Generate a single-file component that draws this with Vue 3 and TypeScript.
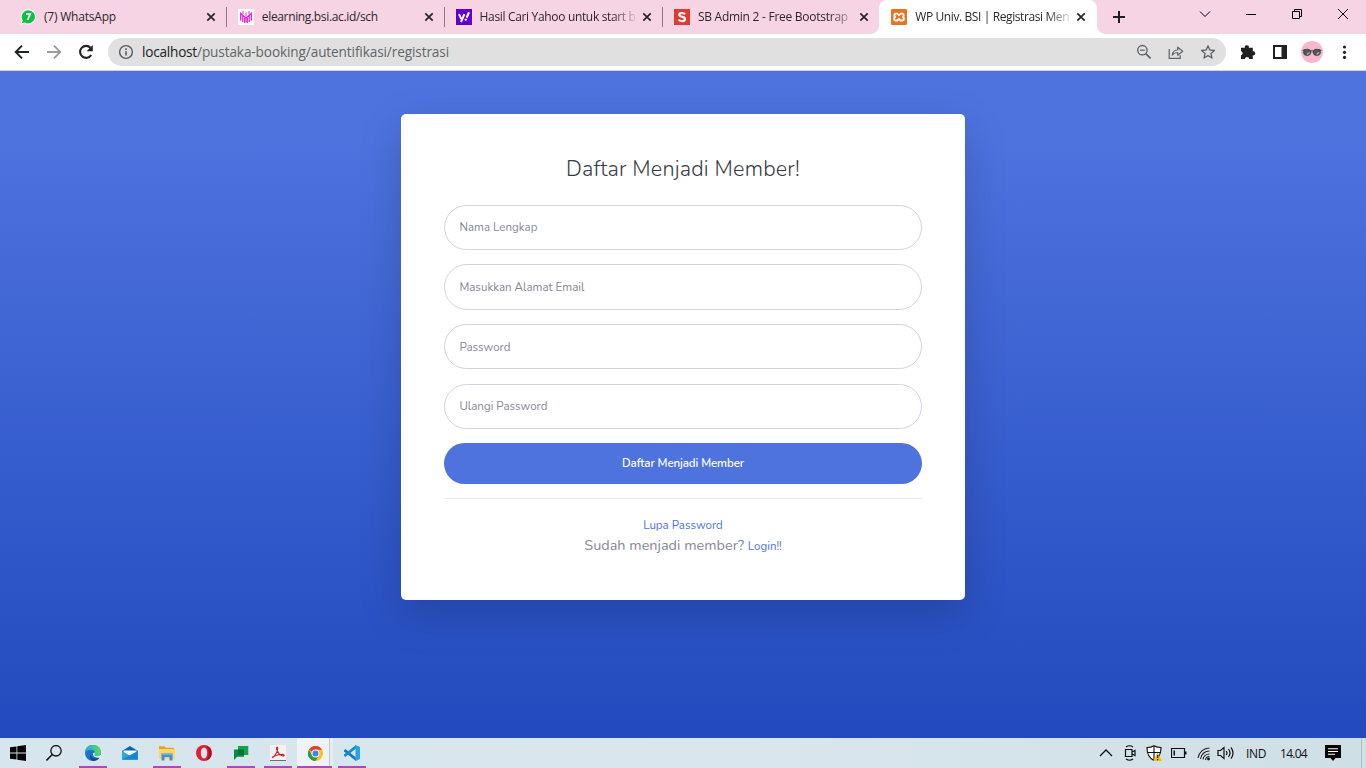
<script setup lang="ts">
import { nextTick, onMounted, type Directive } from 'vue'

interface Tab {
  id: string
  title: string
  width: number
  active?: boolean
}

const tabs: Tab[] = [
  { id: 'whatsapp', title: '(7) WhatsApp', width: 72 },
  { id: 'elearning', title: 'elearning.bsi.ac.id/sch', width: 116 },
  { id: 'yahoo', title: 'Hasil Cari Yahoo untuk start b', width: 156 },
  { id: 'sbadmin', title: 'SB Admin 2 - Free Bootstrap', width: 150 },
  { id: 'xampp', title: 'WP Univ. BSI | Registrasi Men', width: 154, active: true },
]

const fields = [
  { name: 'nama', type: 'text', placeholder: 'Nama Lengkap', width: 78 },
  { name: 'email', type: 'text', placeholder: 'Masukkan Alamat Email', width: 125 },
  { name: 'password1', type: 'password', placeholder: 'Password', width: 51 },
  { name: 'password2', type: 'password', placeholder: 'Ulangi Password', width: 88 },
]

const apps = [
  { id: 'edge', open: true },
  { id: 'mail', open: false },
  { id: 'files', open: true },
  { id: 'opera', open: false },
  { id: 'meet', open: true },
  { id: 'acrobat', open: true },
  { id: 'chrome', open: true },
  { id: 'vscode', open: true },
]

// Tracks the text so that the run is as wide as the given number of pixels.
const fitted: Array<() => void> = []
function fit(el: HTMLElement, width: number) {
  const text = el instanceof HTMLInputElement ? el.placeholder : (el.textContent ?? '').trim()
  const style = getComputedStyle(el)
  const ctx = document.createElement('canvas').getContext('2d')
  if (!ctx || !text) return
  ctx.font = `${style.fontWeight} ${style.fontSize} ${style.fontFamily}`
  const natural = ctx.measureText(text).width
  el.style.letterSpacing = `${((width - natural) / text.length).toFixed(3)}px`
}
const vFit: Directive<HTMLElement, number> = {
  mounted(el, binding) {
    fitted.push(() => fit(el, binding.value))
  },
}
onMounted(async () => {
  await nextTick()
  fitted.forEach((run) => run())
})
</script>

<template>
  <div class="screen">
    <header class="tabstrip">
      <div v-for="tab in tabs" :key="tab.id" class="tab" :class="[{ active: tab.active }, tab.id]">
        <svg v-if="tab.id === 'whatsapp'" class="favicon" viewBox="0 0 16 16">
          <path d="M8.2.3a7.6 7.6 0 1 1-3.5 14.3L.4 15.7l1.2-4.2A7.6 7.6 0 0 1 8.2.3z" fill="#fff" />
          <path d="M8.2 1.3a6.6 6.6 0 1 1-3.4 12.2l-3 .8.9-2.9A6.6 6.6 0 0 1 8.2 1.3z" fill="#0dc143" />
          <path d="M6 5.1h4.2L7.6 11" fill="none" stroke="#fff" stroke-width="1.7" />
        </svg>
        <svg v-else-if="tab.id === 'elearning'" class="favicon" viewBox="0 0 16 16">
          <path d="M0 0h16v16H0z" fill="#fff" />
          <path d="M2.7 11.5V4.500L8 9.200l5.300-4.700v7M4.800 13V6.800M11.200 13V6.800M6.700 14V9M9.300 14V9" fill="none" stroke="#e21ddb" stroke-width="1.300" />
          <path d="M5 2v3M8 3.500v3.700M11 2v3" stroke="#ec2be4" stroke-width="1" />
          <path d="M8 10v3" stroke="#8b3f88" stroke-width=".9" />
        </svg>
        <svg v-else-if="tab.id === 'yahoo'" class="favicon" viewBox="0 0 16 16">
          <path d="M0 0h16v16H0z" fill="#5f01d1" />
          <path d="M3 5.2l2.3 5M8.4 5.2L5 13" fill="none" stroke="#fff" stroke-width="2" />
          <path d="M13 3.2l-2.3 5.4" stroke="#fff" stroke-width="2.2" />
          <circle cx="9.8" cy="10.6" r="1.2" fill="#fff" />
        </svg>
        <svg v-else-if="tab.id === 'sbadmin'" class="favicon" viewBox="0 0 16 16">
          <path d="M0 0h16v16H0z" fill="#dd3d31" />
          <path d="M11 5.3C10 3.6 5.2 3.3 5.2 5.7c0 2.6 5.9 1.5 5.9 4.4 0 2.8-5.4 2.6-6.5.5" fill="none" stroke="#fff" stroke-width="2.1" />
        </svg>
        <svg v-else class="favicon" viewBox="0 0 16 16">
          <rect width="16" height="16" rx="1.2" fill="#e9731f" />
          <path d="M4.9 4.7h1.5L8 6.3l1.6-1.6h1.5a1.6 1.6 0 0 1 0 3.2 1.7 1.7 0 0 1 0 3.6H9.6L8 9.9l-1.6 1.6H4.9a1.7 1.7 0 0 1 0-3.6 1.6 1.6 0 0 1 0-3.2z" fill="none" stroke="#fff" stroke-width="1.8" />
        </svg>
        <span class="tab-title"><span v-fit="tab.width">{{ tab.title }}</span></span>
        <svg class="close" viewBox="0 0 10 10"><path d="M1.3 1.3l7.4 7.4M8.7 1.3L1.3 8.7" stroke="#26242a" stroke-width="1.7" /></svg>
      </div>
      <svg class="plus" viewBox="0 0 12 12"><path d="M6 0v12M0 6h12" stroke="#1f1f22" stroke-width="2" /></svg>
      <div class="window-controls">
        <svg viewBox="0 0 12 12"><path d="M1 3.500l5 5 5-5" fill="none" stroke="#000" stroke-width="1" /></svg>
        <svg viewBox="0 0 12 12"><path d="M1 6.5h10" stroke="#000" /></svg>
        <svg viewBox="0 0 12 12"><path d="M1.5 3.5h7v7h-7zM3.5 3.5v-2h7v7h-2" fill="none" stroke="#000" /></svg>
        <svg viewBox="0 0 12 12"><path d="M1 1l10 10M11 1L1 11" stroke="#000" /></svg>
      </div>
    </header>

    <nav class="toolbar">
      <svg class="nav" viewBox="0 0 16 16"><path d="M15 8H2M8 1.7L1.7 8 8 14.3" fill="none" stroke="#202124" stroke-width="1.9" /></svg>
      <svg class="nav" viewBox="0 0 16 16"><path d="M1 8h13M8 1.7L14.3 8 8 14.3" fill="none" stroke="#9b9b9d" stroke-width="1.9" /></svg>
      <svg class="nav" viewBox="0 0 16 16">
        <path d="M13.2 11a6 6 0 1 1-.7-7.2" fill="none" stroke="#202124" stroke-width="2.1" />
        <path d="M14.8 1v6.2H8.6z" fill="#202124" />
      </svg>
      <div class="omnibox">
        <svg class="info" viewBox="0 0 16 16">
          <circle cx="8" cy="8" r="6.4" fill="none" stroke="#56595d" stroke-width="1.4" />
          <path d="M8 7.2v4.3M8 4.3v1.6" stroke="#56595d" stroke-width="1.6" />
        </svg>
        <span v-fit="55" class="host">localhost</span><span v-fit="252" class="path">/pustaka-booking/autentifikasi/registrasi</span>
        <div class="actions">
          <svg viewBox="0 0 16 16"><circle cx="6.4" cy="6.2" r="4.7" fill="none" stroke="#5f6368" stroke-width="1.4" /><path d="M9.8 9.6l4.8 4.7" stroke="#5f6368" stroke-width="1.8" /><path d="M4 6.2h4.8" stroke="#5f6368" stroke-width="1.2" /></svg>
          <svg viewBox="0 0 16 16"><path d="M1.2 5v9.3h11v-3" fill="none" stroke="#5f6368" stroke-width="1.2" /><path d="M4.2 11c.5-3.5 2.5-5 5.5-5V3.2l5 4-5 4V8.5C7.3 8.5 5.600 9.300 4.200 11z" fill="none" stroke="#5f6368" stroke-width="1.2" stroke-linejoin="round" /></svg>
          <svg viewBox="0 0 16 16"><path d="M8 1.800l1.800 4.200 4.700.4-3.600 3 1.100 4.600-4-2.400L4 14l1.100-4.600-3.600-3L6.200 6z" fill="none" stroke="#5f6368" stroke-width="1.300" stroke-linejoin="round" /></svg>
        </div>
      </div>
      <div class="extensions">
        <svg viewBox="0 0 16 16"><path d="M1 3.700h3.900a2 2 0 1 1 3.900 0h4v3.700a2 2 0 1 1 0 3.900V15H9.200a2.100 2.100 0 0 0-4.200 0H1v-3.700a2.100 2.100 0 0 0 0-4.100z" fill="#202124" /></svg>
        <svg viewBox="0 0 16 16"><path d="M2 2h12v12H2z" fill="none" stroke="#202124" stroke-width="2" /><path d="M9.500 2H14v12H9.500z" fill="#202124" /></svg>
        <svg class="avatar" viewBox="0 0 22 22">
          <circle cx="11" cy="11" r="11" fill="#f8b7cd" />
          <path d="M1.500 9.500l3-.9M20.500 9.500l-3-.9M9 10.500q2-1.600 4 0" fill="none" stroke="#34383b" stroke-width="1" />
          <ellipse cx="6.200" cy="11.300" rx="3.700" ry="3.100" fill="#4f5a5c" stroke="#303638" stroke-width=".8" />
          <ellipse cx="15.800" cy="11.300" rx="3.700" ry="3.100" fill="#4f5a5c" stroke="#303638" stroke-width=".8" />
          <path d="M6 13.400l2.600-2M15.600 13.400l2.600-2" stroke="#b5bbb9" stroke-width="1.200" />
        </svg>
        <svg viewBox="0 0 16 16"><g fill="#202124"><circle cx="8.500" cy="3" r="1.600" /><circle cx="8.500" cy="8.300" r="1.600" /><circle cx="8.500" cy="13.400" r="1.600" /></g></svg>
      </div>
    </nav>

    <main class="page">
      <section class="card">
        <h1><span v-fit="234">Daftar Menjadi Member!</span></h1>
        <form @submit.prevent>
          <input v-for="field in fields" :key="field.name" v-fit="field.width" :type="field.type" :name="field.name" :placeholder="field.placeholder" />
          <button type="submit"><span v-fit="122">Daftar Menjadi Member</span></button>
        </form>
        <hr />
        <div class="links">
          <div class="line"><a v-fit="79.500">Lupa Password</a></div>
          <div class="line"><span v-fit="160">Sudah menjadi member?</span><a v-fit="34" class="login">Login!!</a></div>
        </div>
      </section>
    </main>

    <footer class="taskbar">
      <div class="cell">
        <svg viewBox="0 0 16 16"><path d="M0 2.300l6.500-.9v6.100H0zM7.300 1.300L16 0v7.500H7.300zM0 8.400h6.500v6.200L0 13.700zM7.300 8.400H16V16l-8.700-1.200z" fill="#050505" /></svg>
      </div>
      <div class="cell">
        <svg viewBox="0 0 16 16"><circle cx="10" cy="5.800" r="5.200" fill="none" stroke="#111" stroke-width="1.300" /><path d="M6.300 9.500L.5 15.400" stroke="#111" stroke-width="1.500" /></svg>
      </div>
      <div class="apps">
        <div v-for="app in apps" :key="app.id" class="app" :class="[{ open: app.open }, app.id]">
          <svg v-if="app.id === 'edge'" viewBox="0 0 16 16">
            <defs>
              <linearGradient id="edge-top"><stop offset="0" stop-color="#24a8e0" /><stop offset="1" stop-color="#63d957" /></linearGradient>
            </defs>
            <circle cx="8" cy="8" r="8" fill="#1677c8" />
            <path d="M0 8a8 8 0 0 1 16-.7c0 2.600-1.900 3.900-4 3.900-1.800 0-2.600-.7-2.600-1.200 0-.6.7-.8.7-2.200C10.100 5.700 8 4.800 6 4.800 2.800 4.800.4 6.600 0 8z" fill="url(#edge-top)" />
            <path d="M5.300 8.700c0 3.100 2.900 4.900 6.200 4.600 1.500-.1 2.600-.6 3.200-1A8 8 0 0 1 8.500 16C5 15.500 4.300 11.700 5.300 8.700z" fill="#12489a" />
            <path d="M9.500 10.200c.9 1.600 4.500 1.500 6.500-.7v2.800c-3 1.200-7.500.2-8-2.500-.1-1.400.8-2.200 1.800-2.200.5 1-.6 1.700-.3 2.600z" fill="#e8f3f8" />
          </svg>
          <svg v-else-if="app.id === 'mail'" viewBox="0 0 16 16">
            <path d="M0 6l8-5 8 5v8.600H0z" fill="#1062b5" />
            <path d="M1.500 5.500h13V8L8 11 1.500 8z" fill="#f5fcff" />
            <path d="M0 6l8 4.700L16 6v8.600H0z" fill="#2aa6e5" />
            <path d="M0 14.600L16 6v8.600z" fill="#1686d4" />
          </svg>
          <svg v-else-if="app.id === 'files'" viewBox="0 0 16 16">
            <path d="M0 1.200h5.500l1.300 1.500H15V6H0z" fill="#e5a51b" />
            <path d="M0 4h16v10H0z" fill="#ffd566" />
            <path d="M2.500 15.500V8.600h11v6.900h-3V12h-5v3.500z" fill="#3c8edb" />
            <path d="M2.500 8.600h11v1.500h-11z" fill="#69b4ed" />
          </svg>
          <svg v-else-if="app.id === 'opera'" viewBox="0 0 16 16">
            <circle cx="8" cy="8" r="8" fill="#e41d32" />
            <path d="M10 .4a8 8 0 0 1 0 15.200C13.500 12 13.500 4 10 .4z" fill="#ae1023" />
            <ellipse cx="8" cy="8" rx="3.200" ry="5.500" fill="#d9e5ec" />
          </svg>
          <svg v-else-if="app.id === 'meet'" viewBox="0 0 16 16">
            <path d="M5 1h10.300v9H5z" fill="#14a34a" />
            <path d="M1 4.500h10v7.300H4.200L1 15z" fill="#098a43" />
            <path d="M5 4.500h6V10H5z" fill="#077039" />
          </svg>
          <svg v-else-if="app.id === 'acrobat'" viewBox="0 0 16 16">
            <path d="M0 0h16v16H0z" fill="#f3f2f0" /><path d="M0 15h16v1H0z" fill="#6f6c6b" />
            <path d="M2.500 12.500c2.200-.5 5.200-6.300 5.200-9 0-2.200-1.700-1.400-1 .8.800 2.700 3.400 6.400 6.300 6.700 2 .1 1.400-1.800-1.200-1.600-2.500.1-6.300.9-8.400 2.100-1 .7-1.200 1.300-.9 1z" fill="none" stroke="#cd2028" stroke-width="1.100" />
          </svg>
          <svg v-else-if="app.id === 'chrome'" class="small" viewBox="0 0 16 16">
            <circle cx="8" cy="8" r="8" fill="#fbc116" />
            <path d="M8 8L1 4A8 8 0 0 1 15 4H8z" fill="#dd4133" />
            <path d="M8 8l3.500 2L8 16A8 8 0 0 1 1 4l3.500 6z" fill="#249b4d" />
            <circle cx="8" cy="8" r="4.200" fill="#fff" /><circle cx="8" cy="8" r="3.200" fill="#4280ee" />
          </svg>
          <svg v-else viewBox="0 0 16 16">
            <path d="M0 5.300l1.300-1.200L12 12.500V16L0 6.500z" fill="#1479be" />
            <path d="M0 10.700l1.300 1.200L12 3.500V0L0 9.500z" fill="#168bd3" />
            <path d="M11.500 0L16 2v12l-4.500 2z" fill="#25a2ee" />
          </svg>
        </div>
      </div>
      <div class="tray">
        <svg class="t-up" viewBox="0 0 16 16"><path d="M2 11l6-6 6 6" fill="none" stroke="#111" stroke-width="1.300" /></svg>
        <svg class="t-cam" viewBox="0 0 16 16"><path d="M3.500 4.500h6.500v7H3.500zM10 7l3-1.500v5L10 9M4 2Q7.500-.5 11 2M4 14q3.500 2.500 7 0" fill="none" stroke="#111" stroke-width="1.200" /></svg>
        <svg class="t-shield" viewBox="0 0 16 16">
          <path d="M8 .7Q5 2.500 1 2.500c0 6 1.200 10 7 13 5.800-3 7-7 7-13Q11 2.500 8 .7z" fill="#fff" stroke="#111" stroke-width="1.200" />
          <path d="M8 1v14M1 7.500h14" stroke="#111" stroke-width="1.100" />
          <path d="M11.700 7.500L16 16H7.200z" fill="#fcbc08" /><path d="M11.700 10v3M11.700 14v1.200" stroke="#111" stroke-width="1.200" />
        </svg>
        <svg class="t-battery" viewBox="0 0 16 16"><path d="M.5 3.500h13v9H.5z" fill="none" stroke="#111" stroke-width="1.200" /><path d="M14 6.500h1.500v3H14zM2.500 5.500H4v5H2.500z" fill="#111" /></svg>
        <svg class="t-wifi" viewBox="0 0 16 16">
          <path d="M2 13A11.500 11.500 0 0 1 13.500 3M4.500 14a9 9 0 0 1 9-8M7 14.500A6.500 6.500 0 0 1 13.500 9M9.500 15a4 4 0 0 1 4-3.500" fill="none" stroke="#222" stroke-width="1.100" /><circle cx="12.500" cy="14" r="1.400" fill="#111" />
        </svg>
        <svg class="t-sound" viewBox="0 0 18 16"><path d="M1 5.500h2.500L7 2.500v11l-3.500-3H1z" fill="none" stroke="#111" stroke-width="1.200" /><path d="M9.200 6q1.500 2 0 4M11.500 4q3 4 0 8M14 2.300q4 5.700 0 11.400" fill="none" stroke="#111" stroke-width="1.200" /></svg>
        <span v-fit="20" class="lang">IND</span>
        <span v-fit="27" class="clock">14.04</span>
        <svg class="t-note" viewBox="0 0 16 16"><path d="M0 0h16v13h-5.500L8 16l-2.500-3H0z" fill="#050505" /><path d="M3 3.700h10M3 6.500h10M3 9.300h7" stroke="#fff" stroke-width="1.100" /></svg>
      </div>
    </footer>
  </div>
</template>

<style>
html,
body {
  margin: 0;
  overflow: hidden;
}
</style>

<style scoped>
* {
  box-sizing: border-box;
}
svg {
  display: block;
  flex: none;
}
.screen {
  display: flex;
  flex-direction: column;
  width: 1366px;
  height: 768px;
  overflow: hidden;
  font-family: 'Segoe UI', 'Open Sans', 'Noto Sans', sans-serif;
}
.tabstrip {
  display: flex;
  flex: none;
  height: 34px;
  padding-left: 9.5px;
  background: #f6d4e3;
}
.tab {
  position: relative;
  display: flex;
  align-items: center;
  width: 217.8px;
  padding: 0 11px 0 10.5px;
}
.tab.sbadmin {
  padding: 0 12px 0 11px;
}
.tab:not(.active):not(.sbadmin)::after {
  content: '';
  position: absolute;
  right: 0;
  top: 7px;
  width: 1px;
  height: 20px;
  background: #8c7a84;
}
.tab.active {
  width: 218px;
  margin-left: -1.7px;
  padding-left: 12.2px;
  background: #fff;
  border-radius: 8px 8px 0 0;
}
.tab.active::before,
.tab.active::after {
  content: '';
  position: absolute;
  bottom: 0;
  width: 8px;
  height: 8px;
}
.tab.active::before {
  left: -8px;
  background: radial-gradient(circle at 0 0, transparent 7.5px, #fff 8px);
}
.tab.active::after {
  right: -8px;
  background: radial-gradient(circle at 100% 0, transparent 7.5px, #fff 8px);
}
.favicon {
  width: 16px;
  height: 16px;
}
.tab-title {
  flex: 1;
  min-width: 0;
  margin: 0 5px 0 8px;
  overflow: hidden;
  white-space: nowrap;
  font-size: 12px;
  line-height: 18px;
  color: #2c272b;
}
.yahoo .tab-title,
.sbadmin .tab-title,
.xampp .tab-title {
  mask-image: linear-gradient(90deg, #000 132px, transparent 159px);
}
.close {
  width: 10px;
  height: 10px;
}
.plus {
  width: 12px;
  height: 12px;
  margin: 11px 0 0 16px;
}
.window-controls {
  display: flex;
  gap: 34px;
  margin: 8px 17px 0 auto;
}
.window-controls svg {
  width: 12px;
  height: 12px;
}
.toolbar {
  display: flex;
  flex: none;
  align-items: center;
  height: 37px;
  padding: 0 14px;
  border-bottom: 1px solid #d3d2d6;
  background: #fff;
}
.nav {
  width: 16px;
  height: 16px;
  margin-right: 16px;
}
.nav:nth-child(3) {
  margin-right: 14px;
}
.omnibox {
  display: flex;
  align-items: center;
  width: 1118px;
  height: 28px;
  padding: 0 10px;
  border-radius: 14px;
  background: #e0e0e0;
  font-size: 13.6px;
  line-height: 20px;
  white-space: pre;
}
.info {
  width: 16px;
  height: 16px;
  margin-right: 8px;
}
.host {
  color: #202124;
}
.path {
  color: #62666a;
}
.actions {
  display: flex;
  gap: 16px;
  margin-left: auto;
}
.actions svg {
  width: 16px;
  height: 16px;
}
.extensions {
  display: flex;
  align-items: center;
  margin-left: 14px;
}
.extensions svg {
  width: 16px;
  height: 16px;
  margin-right: 16px;
}
.extensions .avatar {
  width: 22px;
  height: 22px;
  margin: 0 13px 0 -3px;
}
.extensions svg:last-child {
  margin-right: 0;
}
.page {
  flex: 1;
  min-height: 0;
  padding-top: 43px;
  background: linear-gradient(180deg, #4e73df 10%, #224abe 100%);
  font-family: Nunito, Lato, sans-serif;
}
.card {
  width: 564px;
  height: 486px;
  margin: 0 auto;
  padding: 43px;
  border-radius: 5px;
  background: #fff;
  box-shadow: 0 14px 43px rgba(0, 0, 0, 0.175);
}
h1 {
  margin: 0 0 23.75px;
  color: #3a3b45;
  font-size: 21.6px;
  font-weight: 300;
  line-height: 24px;
  text-align: center;
  white-space: nowrap;
}
form {
  display: flex;
  flex-direction: column;
  gap: 14.4px;
}
input {
  width: 100%;
  height: 45.28px;
  margin: 0;
  padding: 0 14.4px;
  border: 1px solid #d1d3e2;
  border-radius: 144px;
  outline: 0;
  background: #fff;
  font: 400 11.52px Nunito, Lato, sans-serif;
}
input::placeholder {
  color: #858796;
  opacity: 1;
}
button {
  height: 41px;
  padding: 0;
  border: 0;
  border-radius: 144px;
  background: #4e73df;
  color: #fff;
  font: 600 11.52px/17px Nunito, Lato, sans-serif;
}
hr {
  height: 1px;
  margin: 13.7px 0 16.3px;
  border: 0;
  background: #e6e6e8;
}
.links {
  color: #858796;
  font-size: 14.4px;
}
.line {
  display: flex;
  justify-content: center;
  align-items: baseline;
  height: 19.7px;
  line-height: 21px;
  white-space: nowrap;
}
.line a {
  color: #4e73df;
  font-size: 11.52px;
}
.login {
  margin-left: 3.5px;
}
.taskbar {
  display: flex;
  flex: none;
  height: 30px;
  background: linear-gradient(90deg, #d6e5ee, #d9e6ed 55%, #cfdfe6);
}
.cell {
  display: flex;
  align-items: center;
  justify-content: center;
  width: 36px;
}
.cell svg,
.app svg {
  width: 16px;
  height: 16px;
}
.apps {
  display: flex;
  margin-left: 2.5px;
}
.app {
  display: flex;
  align-items: center;
  justify-content: center;
  width: 37px;
  position: relative;
}
.app.open::after {
  content: '';
  position: absolute;
  left: 4.5px;
  bottom: 0;
  width: 28px;
  height: 2px;
  background: #b044c4;
}
.app.chrome {
  background: linear-gradient(90deg, #edf3f7 32px, #bdc9d1 32px, #bdc9d1 33px, #e4edf2 33px, #e4edf2 36px, transparent 36px);
}
.app.chrome::after {
  left: 0.5px;
  width: 35px;
}
.app .small {
  width: 15px;
  height: 15px;
}
.tray {
  display: flex;
  align-items: center;
  margin-left: auto;
  padding-right: 20px;
  margin-right: 4px;
  border-right: 1px solid #aebcc4;
  color: #111;
  font-size: 12px;
  white-space: nowrap;
}
.tray svg {
  width: 16px;
  height: 16px;
}
.t-cam {
  margin-left: 8px;
}
.t-shield {
  margin-left: 8px;
}
.t-battery {
  margin-left: 9px;
}
.t-wifi {
  margin-left: 9px;
}
.tray .t-sound {
  width: 18px;
  margin-left: 5px;
}
.lang {
  margin-left: 11px;
}
.clock {
  margin-left: 14px;
}
.t-note {
  margin-left: 18px;
}
</style>
